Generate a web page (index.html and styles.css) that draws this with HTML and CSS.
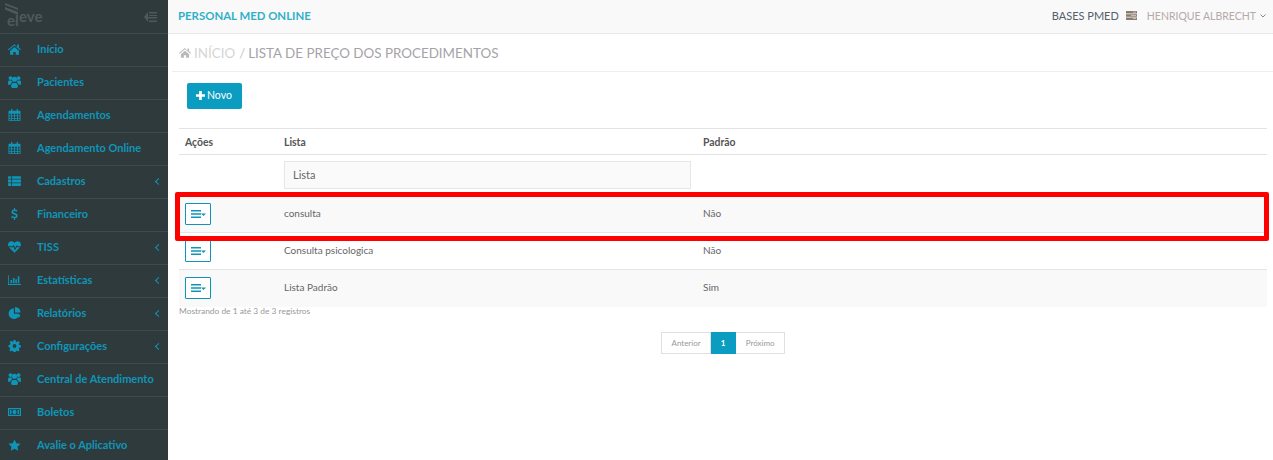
FILE: index.html
```html
<!DOCTYPE html>
<html lang="pt-BR">
<head>
    <meta charset="UTF-8">
    <title>Lista de Preço dos Procedimentos</title>
    <link rel="stylesheet" href="styles.css">
</head>
<body>
    <svg class="sprites" width="0" height="0">
        <symbol id="i-home" viewBox="0 0 16 14"><path d="M8 1 0 7.600l.9 1L8 2.800l7.100 5.800.9-1-2.600-2.200V1.500h-2v3.200zM2.600 9.200V14h3.900v-3.400h3V14h3.900V9.200L8 4.600z"/></symbol>
        <symbol id="i-users" viewBox="0 0 14 13"><circle cx="2.600" cy="2.300" r="2.100"/><circle cx="11.400" cy="2.300" r="2.100"/><circle cx="7" cy="3.500" r="2.800"/><path d="M0 6.500c0-1 .7-1.700 1.500-1.700h2.300c.1.800.4 1.500 1 2-1.200.4-2 1.300-2.200 2.700H0zM14 6.500c0-1-.7-1.700-1.500-1.700h-2.300c-.1.800-.4 1.500-1 2 1.200.4 2 1.300 2.200 2.700H14zM3.400 10.500c0-1.800 1-3 2.200-3h2.800c1.200 0 2.200 1.200 2.200 3v1.200c0 .7-.5 1.300-1.200 1.300H4.600c-.7 0-1.200-.6-1.200-1.300z"/></symbol>
        <symbol id="i-calendar" viewBox="0 0 14 14"><path fill-rule="evenodd" d="M3 0h1.500v2H9.500V0H11v2h2a1 1 0 0 1 1 1v10a1 1 0 0 1-1 1H1a1 1 0 0 1-1-1V3a1 1 0 0 1 1-1h2zM1 5.500v2h2v-2zm3 0v2h2.500v-2zm3.500 0v2H10v-2zm3.500 0v2h2v-2zM1 8.500v2h2v-2zm3 0v2h2.500v-2zm3.500 0v2H10v-2zm3.500 0v2h2v-2zM1 11.500V13h2v-1.500zm3 0V13h2.500v-1.500zm3.500 0V13H10v-1.500zm3.500 0V13h2v-1.500z"/></symbol>
        <symbol id="i-list" viewBox="0 0 16 12"><path d="M0 1a1 1 0 0 1 1-1h3v3.300H0zM5 0h10a1 1 0 0 1 1 1v2.300H5zM0 4.300h4v3.400H0zM5 4.300h11v3.400H5zM0 8.700h4V12H1a1 1 0 0 1-1-1zM5 8.700h11V11a1 1 0 0 1-1 1H5z"/></symbol>
        <symbol id="i-dollar" viewBox="0 0 10 16"><path d="M4.200 0h1.500v2c1.300.1 2.500.6 3.300 1.200L8 5c-.9-.6-1.900-1-3-1-1 0-1.700.4-1.700 1.100 0 .8.8 1.100 2.300 1.700 2.300.8 3.600 1.700 3.600 3.600 0 1.800-1.300 3-3.400 3.300V16H4.200v-2.300C2.800 13.600 1.500 13 .5 12.200L1.600 10.400c1 .8 2.200 1.300 3.300 1.300 1.200 0 1.900-.5 1.900-1.200 0-.8-.7-1.200-2.300-1.800C2.300 8 1 7.200 1 5.300 1 3.600 2.200 2.400 4.200 2.100z"/></symbol>
        <symbol id="i-heart" viewBox="0 0 16 14"><path d="M4.300 0C6 0 7.300 1 8 2c.7-1 2-2 3.700-2C14.200 0 16 2 16 4.300c0 .7-.1 1.300-.4 1.900h-4l-1-1.600-1.800 3.700L7 4.500 5.300 6.200H.4C.100 5.600 0 5 0 4.300 0 2 1.800 0 4.300 0zM1.300 7.400h4.500l.8-.8 1.900 4.600 2.300-4.300.4.500h3.500C13.200 9.400 10.500 11.800 8 14 5.500 11.800 2.800 9.400 1.300 7.400z"/></symbol>
        <symbol id="i-chart" viewBox="0 0 16 12"><path d="M0 0h1v11h15v1H0zM3 6h2v4H3zM6 3.500h2V10H6zM9 5h2v5H9zM12 1.500h2V10h-2z"/></symbol>
        <symbol id="i-pie" viewBox="0 0 14 14"><path d="M6.300 1.500v6.300h6.200A6.200 6.200 0 1 1 6.300 1.500zM7.600 0A6.300 6.300 0 0 1 14 6.400H7.600zM7.800 9h6.100a6 6 0 0 1-2 3.500z"/></symbol>
        <symbol id="i-cog" viewBox="0 0 14 14"><path fill-rule="evenodd" d="M5.800 0h2.400l.4 1.900 1.200.5 1.600-1.100 1.700 1.700-1.100 1.600.5 1.200 1.900.4v2.400l-1.900.4-.5 1.200 1.100 1.600-1.700 1.700-1.600-1.100-1.200.5-.4 1.900H5.800l-.4-1.900-1.200-.5-1.600 1.100-1.700-1.700 1.100-1.600-.5-1.200L0 8.200V5.800l1.900-.4.5-1.200-1.100-1.600L3 .9l1.600 1.100 1.200-.5zM7 4.800a2.200 2.200 0 1 0 0 4.400 2.200 2.200 0 0 0 0-4.400z"/></symbol>
        <symbol id="i-money" viewBox="0 0 16 12"><path fill-rule="evenodd" d="M0 1h16v10H0zm1.500 1.500v7h13v-7zM8 3.200c1.400 0 2.500 1.300 2.500 2.800S9.400 8.800 8 8.800 5.500 7.500 5.500 6 6.600 3.200 8 3.200zM2.500 3.500h1.800v5H2.500zm9.200 0h1.800v5h-1.800z"/></symbol>
        <symbol id="i-star" viewBox="0 0 14 14"><path d="m7 .5 2.100 4.400 4.900.7-3.500 3.400.8 4.800L7 11.500l-4.300 2.300.8-4.800L0 5.600l4.900-.7z"/></symbol>
        <symbol id="i-menu" viewBox="0 0 15 8"><path d="M0 0h10v1.600H0zM0 3.200h10v1.600H0zM0 6.400h10V8H0zM10 3.400h5L12.500 6z"/></symbol>
    </svg>

    <div class="app">
        <aside class="sidebar">
            <div class="brand">
                <div class="logo">
                    <div class="logo-main">
                        <svg class="logo-mark" viewBox="0 0 13 12"><path d="M0 0 13 5v2L0 2zM0 4l13 5v3L0 6.500z"/></svg>
                        <span class="logo-el">el</span>
                    </div>
                    <span class="logo-eve">eve</span>
                </div>
                <svg class="collapse" viewBox="0 0 13 10"><path d="M4 0 0 5l4 5V6.500h9V5H4zM5 0h8v1.500H5zM5 8.500h8V10H5zM5 3h8v1H5z"/></svg>
            </div>
            <a class="nav-item"><svg class="nav-icon"><use href="#i-home"/></svg><span>Início</span></a>
            <a class="nav-item"><svg class="nav-icon"><use href="#i-users"/></svg><span>Pacientes</span></a>
            <a class="nav-item"><svg class="nav-icon"><use href="#i-calendar"/></svg><span>Agendamentos</span></a>
            <a class="nav-item"><svg class="nav-icon"><use href="#i-calendar"/></svg><span>Agendamento Online</span></a>
            <a class="nav-item has-sub"><svg class="nav-icon"><use href="#i-list"/></svg><span>Cadastros</span></a>
            <a class="nav-item"><svg class="nav-icon"><use href="#i-dollar"/></svg><span>Financeiro</span></a>
            <a class="nav-item has-sub"><svg class="nav-icon"><use href="#i-heart"/></svg><span>TISS</span></a>
            <a class="nav-item has-sub"><svg class="nav-icon"><use href="#i-chart"/></svg><span>Estatísticas</span></a>
            <a class="nav-item has-sub"><svg class="nav-icon"><use href="#i-pie"/></svg><span>Relatórios</span></a>
            <a class="nav-item has-sub"><svg class="nav-icon"><use href="#i-cog"/></svg><span>Configurações</span></a>
            <a class="nav-item"><svg class="nav-icon"><use href="#i-users"/></svg><span>Central de Atendimento</span></a>
            <a class="nav-item"><svg class="nav-icon"><use href="#i-money"/></svg><span>Boletos</span></a>
            <a class="nav-item"><svg class="nav-icon"><use href="#i-star"/></svg><span>Avalie o Aplicativo</span></a>
        </aside>

        <main class="main">
            <header class="topbar">
                <div class="company">PERSONAL MED ONLINE</div>
                <div class="topbar-right">
                    <span class="bases">BASES PMED</span>
                    <svg class="bases-icon" viewBox="0 0 11 9"><path d="M0 0h11v2.500H0zM0 3.200h11v2.500H0zM0 6.400h11V9H0z"/><path class="bases-dots" d="M7 .8h3v.8H7zM5 4h5v.8H5zM7 7.200h3V8H7z"/></svg>
                    <span class="user">HENRIQUE ALBRECHT</span>
                    <svg class="user-caret" viewBox="0 0 6 4"><path d="M.5.500 3 3 5.500.5" fill="none" stroke="currentColor"/></svg>
                </div>
            </header>

            <div class="breadcrumb">
                <svg class="crumb-home"><use href="#i-home"/></svg>
                <span class="crumb-link">INÍCIO</span>
                <span class="crumb-sep">/</span>
                <span>LISTA DE PREÇO DOS PROCEDIMENTOS</span>
            </div>

            <div class="content">
                <button class="btn-new"><svg class="plus" viewBox="0 0 10 10"><path d="M3.500 0h3v3.500H10v3H6.500V10h-3V6.500H0v-3h3.500z"/></svg>Novo</button>

                <table class="grid">
                    <thead>
                        <tr>
                            <th class="col-acoes">Ações</th>
                            <th class="col-lista">Lista</th>
                            <th>Padrão</th>
                        </tr>
                    </thead>
                    <tbody>
                        <tr class="filter-row">
                            <td></td>
                            <td><div class="filter">Lista</div></td>
                            <td></td>
                        </tr>
                        <tr class="odd">
                            <td class="cell-btn"><button class="btn-menu"><svg><use href="#i-menu"/></svg></button></td>
                            <td>consulta</td>
                            <td>Não</td>
                        </tr>
                        <tr>
                            <td class="cell-btn"><button class="btn-menu"><svg><use href="#i-menu"/></svg></button></td>
                            <td>Consulta psicologica</td>
                            <td>Não</td>
                        </tr>
                        <tr class="odd">
                            <td class="cell-btn"><button class="btn-menu"><svg><use href="#i-menu"/></svg></button></td>
                            <td>Lista Padrão</td>
                            <td>Sim</td>
                        </tr>
                    </tbody>
                </table>

                <div class="info">Mostrando de 1 até 3 de 3 registros</div>

                <div class="pagination">
                    <a class="page">Anterior</a>
                    <a class="page current">1</a>
                    <a class="page">Próximo</a>
                </div>
            </div>

            <div class="highlight"></div>
        </main>
    </div>
</body>
</html>
```

FILE: styles.css
```css
* {
    box-sizing: border-box;
}

body {
    margin: 0;
    font-family: "Lato", sans-serif;
    background: #fff;
    overflow: hidden;
}

.sprites {
    position: absolute;
}

.app {
    display: flex;
    height: 460px;
    overflow: hidden;
}

/* sidebar */
.sidebar {
    width: 168px;
    flex-shrink: 0;
    background: #2f3a3c;
}

.brand {
    height: 34px;
    display: flex;
    align-items: center;
    justify-content: space-between;
    padding: 0 11px 0 5px;
    border-bottom: 1px solid #3e4a4b;
}

.logo {
    display: flex;
    align-self: flex-start;
    align-items: flex-start;
    margin-top: 1px;
    color: #4f595b;
    font-weight: 700;
}

.logo-main {
    display: flex;
    flex-direction: column;
    width: 14px;
    padding-top: 2px;
}

.logo-mark {
    width: 13px;
    height: 12px;
    fill: #4f595b;
}

.logo-el {
    font-size: 15px;
    line-height: 10px;
    padding-left: 2px;
    white-space: nowrap;
}

.logo-eve {
    font-size: 15px;
    line-height: 12px;
    margin-top: 9px;
}

.collapse {
    width: 13px;
    height: 10px;
    fill: #4f595b;
}

.nav-item {
    height: 33px;
    display: flex;
    align-items: center;
    padding: 0 0 3px 8px;
    border-bottom: 1px solid #3e4a4b;
    color: #0f95b8;
    font-size: 11px;
    font-weight: 700;
    position: relative;
}

.nav-icon {
    width: 13px;
    height: 12px;
    margin-right: 16px;
    fill: #0f95b8;
}

.has-sub::after {
    content: "";
    position: absolute;
    right: 7px;
    top: 13px;
    width: 4px;
    height: 4px;
    border-left: 1px solid #0f95b8;
    border-bottom: 1px solid #0f95b8;
    transform: rotate(45deg);
}

/* top */
.main {
    flex: 1;
    min-width: 0;
    position: relative;
}

.topbar {
    height: 34px;
    display: flex;
    align-items: center;
    justify-content: space-between;
    padding: 0 7px 2px 10px;
    background: #f9f9f9;
    border-bottom: 1px solid #e9e9e9;
}

.company {
    color: #2fb0c9;
    font-size: 11.4px;
    font-weight: 700;
}

.topbar-right {
    display: flex;
    align-items: center;
    font-size: 10.5px;
    color: #b5a9a9;
}

.bases {
    color: #54606a;
    font-size: 11px;
}

.bases-icon {
    width: 11px;
    height: 9px;
    margin: 0 10px 0 7px;
    fill: #8a7d70;
}

.bases-dots {
    fill: #d8d2cb;
}

.user-caret {
    width: 6px;
    height: 4px;
    margin-left: 4px;
    color: #888;
}

.breadcrumb {
    margin-left: 4px;
    height: 38px;
    display: flex;
    align-items: center;
    gap: 3px;
    padding-left: 7px;
    border-bottom: 1px solid #eeeeee;
    color: #a5a3a8;
    font-size: 13.4px;
}

.crumb-home {
    width: 12px;
    height: 11px;
    fill: #b9b9b9;
}

.crumb-link {
    color: #d5d5d5;
}

.crumb-sep {
    margin-left: 1px;
    color: #c8c8c8;
}

/* content */
.content {
    padding: 11px 6px 0 11px;
}

.btn-new {
    display: flex;
    align-items: center;
    gap: 2px;
    margin-left: 8px;
    width: 55px;
    height: 26px;
    padding: 0 0 2px 9px;
    border: 0;
    border-radius: 2px;
    background: #0b9cc1;
    color: #fff;
    font-family: inherit;
    font-size: 10.5px;
}

.plus {
    width: 9px;
    height: 9px;
    fill: #fff;
}

.grid {
    margin-top: 19px;
    width: 100%;
    border-collapse: collapse;
    table-layout: fixed;
    font-size: 10px;
    color: #666;
}

.grid th {
    height: 26px;
    text-align: left;
    padding: 0 6px;
    font-size: 10.4px;
    font-weight: 700;
    color: #555;
    border-top: 1px solid #e3e3e3;
    border-bottom: 1px solid #e3e3e3;
}

.grid td {
    height: 37px;
    padding: 0 6px 2px;
    border-bottom: 1px solid #e5e5e5;
}

.grid td.cell-btn {
    padding-bottom: 0;
}

.grid th.col-acoes {
    width: 99px;
}

.grid th.col-lista {
    width: 419px;
}

.grid tr:last-child td {
    border-bottom: 0;
}

.filter-row td {
    border-bottom: 0;
    height: 41px;
}

.grid .filter-row td {
    padding: 0 6px;
}

.filter {
    height: 28px;
    line-height: 25px;
    padding-left: 8px;
    border: 1px solid #e6e6e6;
    background: #fafafa;
    color: #666;
    font-size: 11px;
}

.odd td {
    background: #f9f9f9;
}

.btn-menu {
    display: block;
    width: 26px;
    height: 22px;
    padding: 0;
    border: 1px solid #0f95b8;
    border-radius: 1px;
    background: #fff;
}

.btn-menu svg {
    display: block;
    width: 15px;
    height: 8px;
    margin: 0 auto;
    fill: #0f95b8;
}

.info {
    margin-top: -1px;
    font-size: 8.4px;
    color: #999;
}

.pagination {
    display: flex;
    justify-content: center;
    margin-top: 16px;
}

.page {
    height: 22px;
    line-height: 20px;
    padding: 0 9.5px;
    border: 1px solid #e0e0e0;
    font-size: 8px;
    color: #999;
}

.page + .page {
    border-left: 0;
}

.page.current {
    width: 25px;
    padding: 0;
    text-align: center;
    background: #0b9cc1;
    border-color: #0b9cc1;
    color: #fff;
    font-weight: 700;
}

/* red box drawn over the first row */
.highlight {
    position: absolute;
    left: 7px;
    top: 192px;
    width: 1094px;
    height: 49px;
    border: 5px solid #ff0000;
    border-radius: 2px;
}
```
